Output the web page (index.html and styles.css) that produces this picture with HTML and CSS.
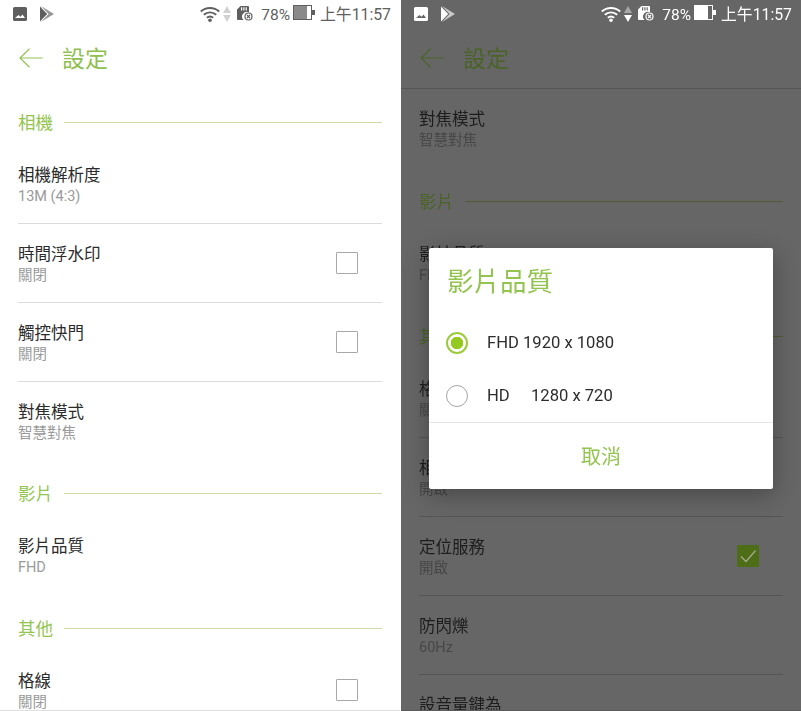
FILE: index.html
```html
<!DOCTYPE html>
<html>
  <head>
    <meta charset="utf-8">
    <meta name="viewport" content="width=device-width">
    <title>設定</title>
    <link rel="stylesheet" href="styles.css">
  </head>
  <body>
    <svg class="defs" width="0" height="0">
      <symbol id="i-pic" viewBox="0 0 14 14">
        <path fill-rule="evenodd" d="M1.500 0h11A1.500 1.500 0 0 1 14 1.500v11a1.500 1.500 0 0 1-1.500 1.500h-11A1.500 1.500 0 0 1 0 12.500v-11A1.500 1.500 0 0 1 1.500 0zM2 11h10L9.500 7.500 7.500 9.800 5.500 8z"/>
      </symbol>
      <symbol id="i-play" viewBox="0 0 14 16">
        <path d="M0 .5 7.200 8 0 15.500 0 8z"/>
        <path opacity=".65" d="M1 0 14 8 1 16 8.500 8z"/>
      </symbol>
      <symbol id="i-wifi" viewBox="0 0 20 16">
        <g fill="none" stroke="currentColor" stroke-width="2">
          <path d="M.8 5.600C6 .9 14 .9 19.200 5.600"/>
          <path d="M3.800 8.800C7.500 5.600 12.500 5.600 16.200 8.800"/>
          <path d="M6.800 11.700C8.700 10.200 11.300 10.200 13.200 11.700"/>
        </g>
        <circle cx="10" cy="14.200" r="1.800" fill="currentColor"/>
      </symbol>
      <symbol id="i-sd" viewBox="0 0 16 15">
        <path fill-rule="evenodd" d="M3.500 0H11a1 1 0 0 1 1 1v5.300A4.800 4.800 0 0 0 6.500 14H1a1 1 0 0 1-1-1V3.500zM4 1.300v3.200h1.200V1.300zM6.300 1.300v3.200h1.200V1.300zM8.600 1.300v3.200h1.200V1.300z"/>
        <circle cx="11.500" cy="10.500" r="3.500" fill="none" stroke="currentColor" stroke-width="1.200"/>
        <path d="M10 9 13 12M13 9 10 12" stroke="currentColor" stroke-width="1.100"/>
      </symbol>
    </svg>

    <div class="screen">
      <div class="panel">
        <div class="status">
          <svg class="ic-pic"><use href="#i-pic"/></svg>
          <svg class="ic-play"><use href="#i-play"/></svg>
          <span class="status-right">
            <svg class="ic-wifi"><use href="#i-wifi"/></svg>
            <span class="updown"><i class="up"></i><i class="down"></i></span>
            <svg class="ic-sd"><use href="#i-sd"/></svg>
            <span class="pct">78%</span>
            <span class="battery"><i></i></span>
            <span class="clock">上午11:57</span>
          </span>
        </div>
        <div class="header">
          <svg class="back" viewBox="0 0 24 20"><path d="M23.500 10H1M10.500 .8 1 10l9.500 9.200"/></svg>
          <span class="title">設定</span>
        </div>

        <div class="section"><span>相機</span><hr></div>
        <div class="item"><div class="text"><div class="name">相機解析度</div><div class="sub">13M (4:3)</div></div></div>
        <div class="item"><div class="text"><div class="name">時間浮水印</div><div class="sub">關閉</div></div><span class="check"></span></div>
        <div class="item"><div class="text"><div class="name">觸控快門</div><div class="sub">關閉</div></div><span class="check"></span></div>
        <div class="item last"><div class="text"><div class="name">對焦模式</div><div class="sub">智慧對焦</div></div></div>

        <div class="section tight"><span>影片</span><hr></div>
        <div class="item last"><div class="text"><div class="name">影片品質</div><div class="sub">FHD</div></div></div>

        <div class="section"><span>其他</span><hr></div>
        <div class="item"><div class="text"><div class="name">格線</div><div class="sub">關閉</div></div><span class="check"></span></div>
      </div>

      <div class="panel dim">
        <div class="status">
          <svg class="ic-pic"><use href="#i-pic"/></svg>
          <svg class="ic-play"><use href="#i-play"/></svg>
          <span class="status-right">
            <svg class="ic-wifi"><use href="#i-wifi"/></svg>
            <span class="updown"><i class="up"></i><i class="down"></i></span>
            <svg class="ic-sd"><use href="#i-sd"/></svg>
            <span class="pct">78%</span>
            <span class="battery"><i></i></span>
            <span class="clock">上午11:57</span>
          </span>
        </div>
        <div class="header">
          <svg class="back" viewBox="0 0 24 20"><path d="M23.500 10H1M10.500 .8 1 10l9.500 9.200"/></svg>
          <span class="title">設定</span>
        </div>

        <div class="item last"><div class="text"><div class="name">對焦模式</div><div class="sub">智慧對焦</div></div></div>

        <div class="section"><span>影片</span><hr></div>
        <div class="item last"><div class="text"><div class="name">影片品質</div><div class="sub">FHD</div></div></div>

        <div class="section"><span>其他</span><hr></div>
        <div class="item"><div class="text"><div class="name">格線</div><div class="sub">關閉</div></div><span class="check"></span></div>
        <div class="item"><div class="text"><div class="name">相片位置</div><div class="sub">開啟</div></div></div>
        <div class="item"><div class="text"><div class="name">定位服務</div><div class="sub">開啟</div></div>
          <span class="check on"><svg viewBox="0 0 22 22"><path d="M4 11.500 9 16.500 18.500 5.500"/></svg></span>
        </div>
        <div class="item"><div class="text"><div class="name">防閃爍</div><div class="sub">60Hz</div></div></div>
        <div class="item"><div class="text"><div class="name">設音量鍵為</div></div></div>

        <div class="dialog">
          <div class="dialog-title">影片品質</div>
          <div class="option"><span class="radio on"></span><span>FHD 1920 x 1080</span></div>
          <div class="option"><span class="radio"></span><span class="opt-hd">HD</span><span>1280 x 720</span></div>
          <div class="dialog-btn">取消</div>
        </div>
      </div>
    </div>
  </body>
</html>
```
FILE: styles.css
```css
body {
  margin: 0;
  background-color: #fff;
  font-family: Roboto, "Noto Sans CJK TC", sans-serif;
}

.defs {
  position: absolute;
}

.screen {
  display: flex;
  gap: 1px;
  width: 801px;
  height: 711px;
  overflow: hidden;
  filter: blur(0.35px);
}

.panel {
  position: relative;
  box-sizing: border-box;
  width: 400px;
  height: 711px;
  overflow: hidden;
  background-color: #fff;
  border-bottom: 1px solid #ddd;
  color: #2b2b2b;
}

/* status bar */
.status {
  box-sizing: border-box;
  display: flex;
  align-items: center;
  height: 28px;
  padding: 0 9px 1px 13px;
  color: #5f5f5f;
}

.status svg {
  fill: currentColor;
  flex: none;
}

.ic-pic {
  width: 14px;
  height: 14px;
}

.ic-play {
  width: 14px;
  height: 16px;
  margin-left: 13px;
}

.status-right {
  display: flex;
  align-items: center;
  margin-left: auto;
}

.ic-wifi {
  width: 20px;
  height: 16px;
}

.updown {
  display: flex;
  flex-direction: column;
  gap: 2px;
  margin: 0 6px 0 3px;
}

.updown i {
  display: block;
  width: 0;
  height: 0;
  border-left: 4px solid transparent;
  border-right: 4px solid transparent;
}

.up {
  border-bottom: 7px solid #d2d2d2;
}

.down {
  border-top: 7px solid #d2d2d2;
}

.ic-sd {
  width: 16px;
  height: 15px;
}

.pct {
  margin: 2px 0 0 8px;
  font-size: 15.500px;
  color: #5f5f5f;
}

.battery {
  position: relative;
  box-sizing: border-box;
  width: 19px;
  height: 15px;
  margin: 0 8px 2px 3px;
  border: 1px solid #5f5f5f;
}

.battery i {
  display: block;
  width: 13px;
  height: 13px;
  background-color: #8a8a8a;
}

.battery:after {
  content: '';
  position: absolute;
  right: -4px;
  top: 4px;
  width: 3px;
  height: 5px;
  background-color: #5f5f5f;
}

.clock {
  margin-bottom: 1px;
  font-size: 15.800px;
  white-space: nowrap;
}

/* title row */
.header {
  box-sizing: border-box;
  display: flex;
  align-items: center;
  height: 60px;
  padding: 0 0 1px 19px;
}

.back {
  width: 24px;
  height: 20px;
  fill: none;
  stroke: #92c353;
  stroke-width: 1.2;
}

.title {
  margin-left: 19px;
  padding-bottom: 1px;
  font-size: 23px;
  color: #8fc04f;
}

/* list */
.section {
  display: flex;
  align-items: center;
  gap: 11px;
  height: 44px;
  padding: 12px 18px 0;
  margin-bottom: 1px;
  font-size: 17.500px;
  color: #93c44f;
}

.section span {
  position: relative;
  top: -1px;
}

.section.tight {
  margin-top: -1px;
}

.section hr {
  flex: 1;
  margin: 0;
  border: none;
  border-top: 1px solid #cbdca6;
}

.item {
  display: flex;
  align-items: center;
  justify-content: space-between;
  box-sizing: border-box;
  height: 79px;
  margin: 0 18px;
  padding-top: 3px;
  border-bottom: 1px solid #dcdcdc;
}

.item.last {
  height: 78px;
  padding-top: 2px;
  border-bottom: none;
}

.text {
  min-height: 41px;
}

.name {
  font-size: 16.500px;
  line-height: 22px;
}

.sub {
  margin-top: 1px;
  font-size: 14.500px;
  line-height: 18px;
  color: #9a9a9a;
}

.check {
  box-sizing: border-box;
  width: 22px;
  height: 22px;
  margin: 0 24px 3px 0;
  border: 1.500px solid #a8a8a8;
  border-radius: 1px;
}

/* dimmed panel */
.dim {
  background-color: #666;
  border-bottom-color: #5a5a5a;
  color: #1d1d1d;
}

.dim .status {
  color: #fff;
}

.dim .pct {
  color: #fff;
}

.dim .up {
  border-bottom-color: #a8a8a8;
}

.dim .down {
  border-top-color: #fff;
}

.dim .battery {
  border-color: #fff;
}

.dim .battery i {
  background-color: #fff;
}

.dim .battery:after {
  background-color: #fff;
}

.dim .header {
  height: 61px;
  border-bottom: 1px solid #555;
}

.dim .back {
  stroke: #4a6428;
}

.dim .title {
  color: #4a6428;
}

.dim .section {
  color: #4a6428;
}

.dim .section hr {
  border-top-color: #4f5c35;
}

.dim .item {
  border-bottom-color: #555;
}

.dim .sub {
  color: #474747;
}

.check.on {
  border: none;
  background-color: #4d6d16;
}

.check.on svg {
  display: block;
  fill: none;
  stroke: #a3ad90;
  stroke-width: 1.200;
}

/* dialog */
.dialog {
  position: absolute;
  left: 28px;
  top: 248px;
  width: 344px;
  height: 241px;
  background-color: #fff;
  border-radius: 2px;
  box-shadow: 0 6px 24px rgba(0, 0, 0, 0.3);
  color: #2d2d2d;
}

.dialog-title {
  height: 68px;
  padding-left: 18px;
  font-size: 26.500px;
  line-height: 68px;
  color: #93c44f;
}

.option {
  display: flex;
  align-items: center;
  height: 53px;
  padding-left: 17px;
  font-size: 16.600px;
}

.radio {
  box-sizing: border-box;
  width: 22px;
  height: 22px;
  margin-right: 19px;
  border: 1px solid #a5a5a5;
  border-radius: 50%;
}

.radio.on {
  border: 2px solid #9ccb3c;
  background: radial-gradient(circle, #94c91f 0 6px, #fff 6.500px);
}

.opt-hd {
  width: 44px;
}

.dialog-btn {
  height: 67px;
  border-top: 1px solid #e6e6e6;
  font-size: 20px;
  line-height: 68px;
  text-align: center;
  color: #93c44f;
}
```
